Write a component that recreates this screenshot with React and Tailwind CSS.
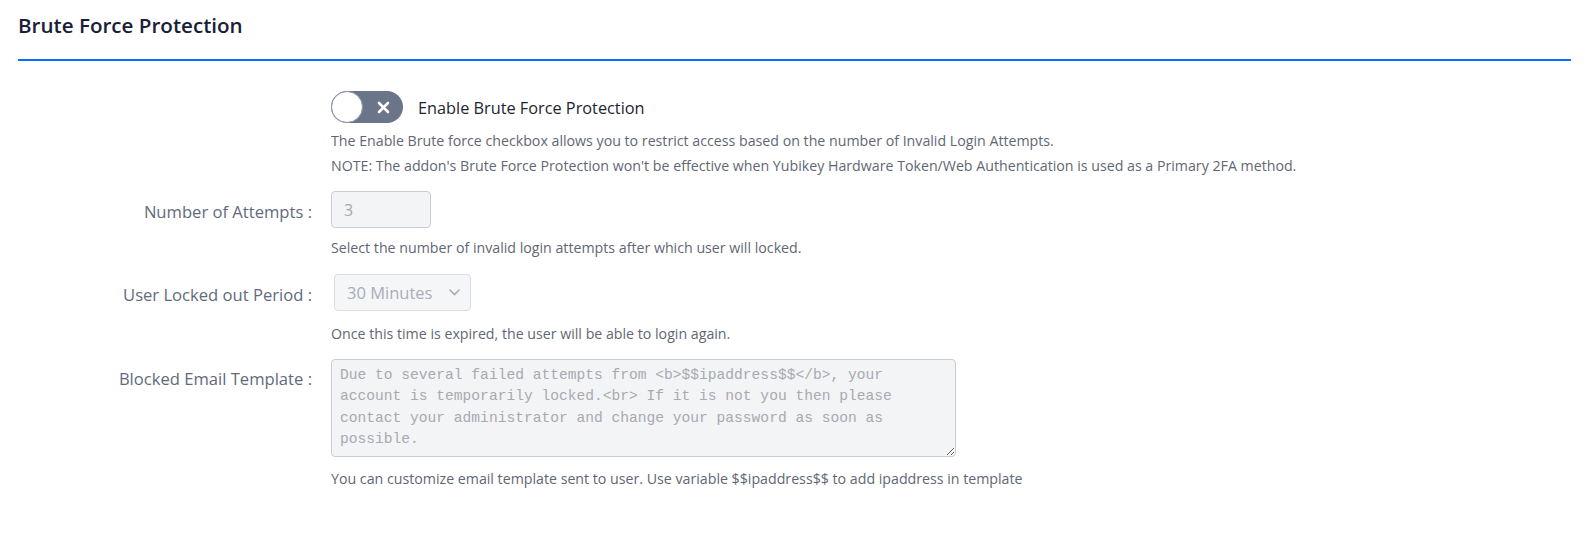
import { useState } from 'react';

const font = { fontFamily: '"Open Sans", "Noto Sans", sans-serif' };

const Toggle = ({ on, onChange }) => (
  <button
    type="button"
    onClick={() => onChange(!on)}
    className="relative flex h-[32px] w-[72px] shrink-0 items-center rounded-full bg-[#6b7589]"
  >
    <span className="absolute left-0 top-0 h-[32px] w-[32px] rounded-full border border-[#8a93a6] bg-white" />
    <svg className="absolute left-[46px] top-[10px]" width="13" height="13" viewBox="0 0 13 13">
      <path d="M2 2 L11 11 M11 2 L2 11" stroke="white" strokeWidth="2.6" strokeLinecap="round" />
    </svg>
  </button>
);

const Row = ({ label, children, top }) => (
  <div className="flex">
    <div
      className={`w-[313px] shrink-0 pr-[19px] text-right text-[16.6px] text-[#5f6b7d] ${top ? 'pt-[8px]' : 'pt-[9px]'}`}
    >
      {label}
    </div>
    <div className="flex-1">{children}</div>
  </div>
);

const Help = ({ children }) => (
  <p className="text-[14.2px] leading-[25px] text-[#5f6775]">{children}</p>
);

export default function App() {
  const [enabled, setEnabled] = useState(false);

  return (
    <div className="min-h-screen bg-white px-[18px]" style={font}>
      <div className="border-b-2 border-[#0d6efd] pt-[12px] pb-[21px]">
        <h2 className="text-[20.6px] font-semibold leading-[26px] text-[#172038]">Brute Force Protection</h2>
      </div>

      <div className="pt-[30px]">
        <div className="flex pl-[313px]">
          <div className="flex items-center">
            <Toggle on={enabled} onChange={setEnabled} />
            <span className="ml-[15px] pt-[2px] text-[16.3px] text-[#1f2433]">Enable Brute Force Protection</span>
          </div>
        </div>
        <div className="pl-[313px] pt-[5px]">
          <Help>The Enable Brute force checkbox allows you to restrict access based on the number of Invalid Login Attempts.</Help>
          <Help>NOTE: The addon's Brute Force Protection won't be effective when Yubikey Hardware Token/Web Authentication is used as a Primary 2FA method.</Help>
        </div>

        <div className="mt-[13px]">
          <Row label="Number of Attempts :">
            <input
              disabled
              value="3"
              readOnly
              className="h-[37px] w-[100px] rounded-[4px] border border-[#c9cdd4] bg-[#f3f4f6] px-[12px] text-[16px] text-[#a3a8b1]"
            />
            <div className="pt-[7px]">
              <Help>Select the number of invalid login attempts after which user will locked.</Help>
            </div>
          </Row>
        </div>

        <div className="mt-[14px]">
          <Row label="User Locked out Period :">
            <div className="relative ml-[3px] h-[37px] w-[137px] rounded-[4px] border border-[#dadde2] bg-[#f5f6f8]">
              <span className="absolute left-[12px] top-[6px] text-[16.5px] text-[#a9aeb6]">30 Minutes</span>
              <svg className="absolute right-[10px] top-[14px]" width="11" height="7" viewBox="0 0 11 7">
                <path d="M1 1 L5.5 5.5 L10 1" fill="none" stroke="#a9aeb6" strokeWidth="1.6" strokeLinecap="round" />
              </svg>
            </div>
            <div className="pt-[10px]">
              <Help>Once this time is expired, the user will be able to login again.</Help>
            </div>
          </Row>
        </div>

        <div className="mt-[13px]">
          <Row label="Blocked Email Template :" top>
            <textarea
              disabled
              readOnly
              value="Due to several failed attempts from <b>$$ipaddress$$</b>, your account is temporarily locked.<br> If it is not you then please contact your administrator and change your password as soon as possible."
              className="block h-[98px] w-[625px] resize rounded-[4px] border border-[#c9cdd4] bg-[#f3f4f6] px-[8px] py-[5px] text-[14.6px] leading-[21.4px] text-[#a7aab0]"
              style={{ fontFamily: '"Liberation Mono", monospace' }}
            />
            <div className="pt-[9px]">
              <Help>You can customize email template sent to user. Use variable $$ipaddress$$ to add ipaddress in template</Help>
            </div>
          </Row>
        </div>
      </div>
    </div>
  );
}
